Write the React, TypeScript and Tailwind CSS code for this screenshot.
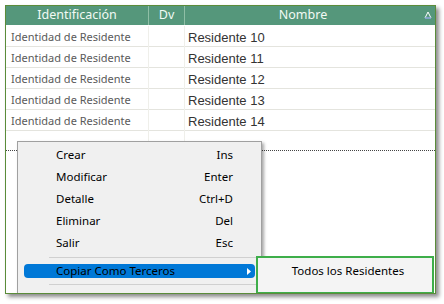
import React from 'react';

const rows = ['Residente 10', 'Residente 11', 'Residente 12', 'Residente 13', 'Residente 14'];

const items = [
  { label: 'Crear', key: 'Ins' },
  { label: 'Modificar', key: 'Enter' },
  { label: 'Detalle', key: 'Ctrl+D' },
  { label: 'Eliminar', key: 'Del' },
  { label: 'Salir', key: 'Esc' },
];

const ui = { fontFamily: '"Noto Sans", "Open Sans", sans-serif' };
const arial = { fontFamily: '"Liberation Sans", Arial, sans-serif' };

export default function App() {
  return (
    <div className="w-[444px] h-[304px] bg-white pl-[5px] pt-[5px]">
      <div className="relative w-[431px] h-[289px] border border-[#5b8c3a] bg-white overflow-hidden shadow-[3px_3px_4px_rgba(0,0,0,0.45)]">
        {/* header */}
        <div className="grid grid-cols-[143px_36px_1fr] h-[20px] bg-[#55977b] text-[#f2faf4] text-[12.5px] border-b border-white" style={ui}>
          <div className="flex items-center justify-center border-r border-[#8fbfa6]">Identificación</div>
          <div className="flex items-center justify-center border-r border-[#8fbfa6]">Dv</div>
          <div className="relative flex items-center justify-center pr-[14px]">
            Nombre
            <svg className="absolute right-[3px] top-[5px]" width="8" height="8" viewBox="0 0 8 8">
              <path d="M4 1 L7 7 L1 7 Z" fill="none" stroke="#ffffff" strokeWidth="1" />
              <path d="M1 7 L7 7" stroke="#5a7fd0" strokeWidth="1" />
            </svg>
          </div>
        </div>

        {/* rows */}
        {rows.map((r) => (
          <div key={r} className="grid grid-cols-[143px_36px_1fr] h-[21px] border-b border-[#e4e4de]">
            <div className="flex items-center pl-[5px] text-[11px] text-[#5a5a5a] border-r border-[#efefea]" style={ui}>
              Identidad de Residente
            </div>
            <div className="border-r border-[#efefea]" />
            <div className="flex items-center pl-[3px] pt-[2px] text-[13px] text-[#333333]" style={arial}>
              {r}
            </div>
          </div>
        ))}
        <div className="grid grid-cols-[143px_36px_1fr] h-[20px] border-b border-dotted border-[#444444]">
          <div className="border-r border-[#efefea]" />
          <div className="border-r border-[#efefea]" />
          <div />
        </div>

        {/* context menu */}
        <div
          className="absolute left-[11px] top-[135px] w-[245px] h-[160px] bg-[#f0f0f0] border border-[#a0a0a0] shadow-[2px_2px_3px_rgba(0,0,0,0.35)] pt-[2px] text-[11.5px] text-black"
          style={ui}
        >
          {items.map((it) => (
            <div key={it.label} className="flex items-center justify-between h-[22px] pl-[38px] pr-[28px]">
              <span>{it.label}</span>
              <span>{it.key}</span>
            </div>
          ))}
          <div className="h-[1px] bg-[#d0d0d0] ml-[31px] mr-[2px] mt-[3px]" />
          <div className="flex items-center justify-between h-[14px] mt-[6px] ml-[6px] mr-[6px] rounded-[4px] bg-[#0078d7] pl-[32px] pr-[4px]">
            <span className="leading-none">Copiar Como Terceros</span>
            <svg width="4" height="7" viewBox="0 0 4 7">
              <path d="M0 0 L4 3.5 L0 7 Z" fill="#ffffff" />
            </svg>
          </div>
          <div className="h-[1px] bg-[#d0d0d0] ml-[31px] mr-[2px] mt-[6px]" />
        </div>

        {/* submenu */}
        <div
          className="absolute left-[250px] top-[250px] w-[178px] h-[38px] bg-[#f4f4f4] border-2 border-[#3eae4a] flex items-start justify-center pt-[4px] pl-[6px] text-[11.5px] text-black"
          style={ui}
        >
          Todos los Residentes
        </div>
      </div>
    </div>
  );
}
